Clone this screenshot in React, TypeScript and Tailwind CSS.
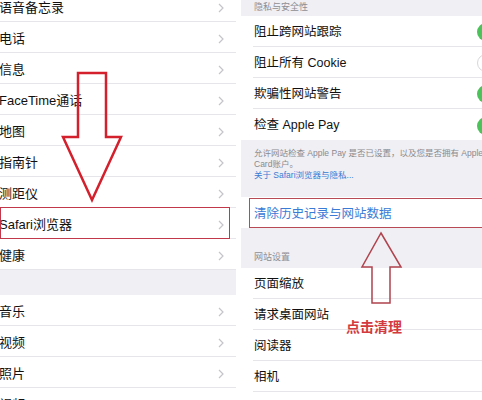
import React from "react";

const font = { fontFamily: '"Liberation Sans", "Noto Sans CJK SC", sans-serif' };

function Chevron() {
  return (
    <svg width="6" height="10" viewBox="0 0 6 10" className="shrink-0">
      <path d="M1 1 L5 5 L1 9" fill="none" stroke="#c4c4c9" strokeWidth="1.2" />
    </svg>
  );
}

function LeftRow({ label }: { label: string }) {
  return (
    <div className="h-[31px] shrink-0 flex items-center justify-between border-b border-[#e6e6ea] pt-[3px] pr-[12px] text-[13px] text-[#111]">
      <span className="-ml-[1px]">{label}</span>
      <Chevron />
    </div>
  );
}

function Toggle({ on }: { on: boolean }) {
  return (
    <div
      className={
        on
          ? "w-[34px] h-[18px] rounded-full bg-[#4cc35a] -mr-[29px] shrink-0"
          : "w-[34px] h-[18px] rounded-full bg-white border border-[#d8d8dc] -mr-[29px] shrink-0"
      }
    />
  );
}

function RightRow({ label, toggle, last }: { label: string; toggle?: "on" | "off"; last?: boolean }) {
  return (
    <div className="bg-white pl-[12px] shrink-0">
      <div
        className={
          last
            ? "h-[31px] flex items-center justify-between text-[12.5px] text-[#111] pl-[1px] pt-[2px]"
            : "h-[31px] flex items-center justify-between text-[12.5px] text-[#111] pl-[1px] pt-[2px] border-b border-[#e6e6ea]"
        }
      >
        <span>{label}</span>
        {toggle ? <Toggle on={toggle === "on"} /> : null}
      </div>
    </div>
  );
}

export default function App() {
  return (
    <div className="relative w-[482px] h-[400px] overflow-hidden bg-white flex items-start" style={font}>
      {/* Left panel */}
      <div className="w-[236px] shrink-0 flex flex-col -mt-[9px]">
        {["语音备忘录", "电话", "信息", "FaceTime通话", "地图", "指南针", "测距仪", "Safari浏览器", "健康"].map((l) => (
          <LeftRow key={l} label={l} />
        ))}
        <div className="h-[25px] bg-[#efeff4] shrink-0" />
        {["音乐", "视频", "照片", "视频"].map((l, i) => (
          <LeftRow key={i} label={l} />
        ))}
      </div>
      <div className="w-[5px] shrink-0 bg-white" />
      {/* Right panel */}
      <div className="w-[241px] h-[400px] shrink-0 flex flex-col bg-[#efeff4] overflow-hidden">
        <div className="h-[16px] shrink-0 flex items-center pl-[13px] text-[9px] text-[#8e8e93]">隐私与安全性</div>
        <RightRow label="阻止跨网站跟踪" toggle="on" />
        <RightRow label="阻止所有 Cookie" toggle="off" />
        <RightRow label="欺骗性网站警告" toggle="on" />
        <RightRow label="检查 Apple Pay" toggle="on" last />
        <div className="h-[57px] shrink-0 pl-[13px] pt-[8px] text-[8.5px] leading-[11px] text-[#8a8a8e] whitespace-nowrap">
          <div>允许网站检查 Apple Pay 是否已设置，以及您是否拥有 Apple</div>
          <div>Card账户。</div>
          <div className="text-[#3a7bd5]">关于 Safari浏览器与隐私...</div>
        </div>
        <div className="h-[31px] shrink-0 bg-white flex items-center pl-[13px] pt-[3px] text-[12.5px] text-[#3a7bd5]">
          清除历史记录与网站数据
        </div>
        <div className="h-[40px] shrink-0 flex items-end pb-[4px] pl-[13px] text-[9px] text-[#8e8e93]">网站设置</div>
        <RightRow label="页面缩放" />
        <RightRow label="请求桌面网站" />
        <RightRow label="阅读器" />
        <RightRow label="相机" />
        <RightRow label="麦克风" />
      </div>

      {/* Red box around Safari row */}
      <div className="absolute left-0 top-[207px] w-[230px] h-[32px] border-[1.5px] border-[#c1384a]" />
      {/* Red box around clear history row */}
      <div className="absolute left-[249px] top-[198px] w-[240px] h-[30px] border-[1.5px] border-[#b84a55]" />

      {/* Arrows */}
      <svg className="absolute left-0 top-0 pointer-events-none" width="482" height="400">
        <path
          d="M78 73 L106 73 L106 137 L121 137 L92 200 L63 137 L78 137 Z"
          fill="none"
          stroke="#d4202c"
          strokeWidth="2.5"
          strokeLinejoin="miter"
        />
        <path
          d="M381 233 L401 267 L390 267 L390 303 L372 303 L372 267 L362 267 Z"
          fill="none"
          stroke="#b0434d"
          strokeWidth="1.5"
        />
      </svg>
      <div className="absolute left-[346px] top-[317px] text-[14px] font-bold text-[#d33a40] leading-[20px]">
        点击清理
      </div>
    </div>
  );
}
